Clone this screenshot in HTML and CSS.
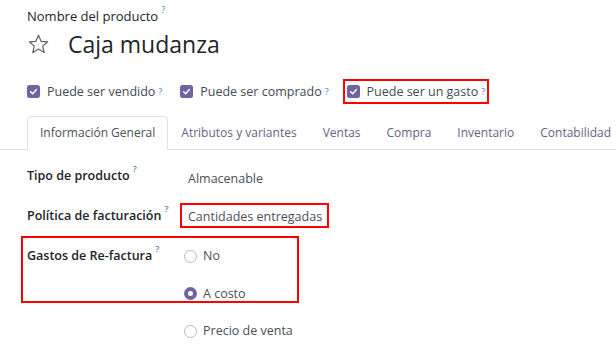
FILE: index.html
```html
<!DOCTYPE html>
<html lang="es">
<head>
<meta charset="utf-8">
<title>Caja mudanza</title>
<link rel="stylesheet" href="styles.css">
</head>
<body>
<div class="sheet">
  <div class="name-label">Nombre del producto<sup class="tip">?</sup></div>
  <div class="title-row">
    <svg class="star" width="21" height="20" viewBox="0 0 21 20"><polygon points="10.5,1.2 13.1,7.3 19.7,7.8 14.7,12.1 16.2,18.6 10.5,15.1 4.8,18.6 6.3,12.1 1.3,7.8 7.9,7.3" fill="none" stroke="#5f5f5f" stroke-width="1.2" stroke-linejoin="round"/></svg>
    <h1 class="title">Caja mudanza</h1>
  </div>
  <div class="checks">
    <label class="check"><svg class="cbox" width="13" height="13" viewBox="0 0 13 13"><rect width="13" height="13" rx="2.5" fill="#71639e"/><path d="M3.6 6.7 L5.7 8.7 L9.4 4.6" fill="none" stroke="#fff" stroke-width="1.5" stroke-linecap="round" stroke-linejoin="round"/></svg>Puede ser vendido<sup class="tip">?</sup></label>
    <label class="check"><svg class="cbox" width="13" height="13" viewBox="0 0 13 13"><rect width="13" height="13" rx="2.5" fill="#71639e"/><path d="M3.6 6.7 L5.7 8.7 L9.4 4.6" fill="none" stroke="#fff" stroke-width="1.5" stroke-linecap="round" stroke-linejoin="round"/></svg>Puede ser comprado<sup class="tip">?</sup></label>
    <span class="annot annot-check"><label class="check"><svg class="cbox" width="13" height="13" viewBox="0 0 13 13"><rect width="13" height="13" rx="2.5" fill="#71639e"/><path d="M3.6 6.7 L5.7 8.7 L9.4 4.6" fill="none" stroke="#fff" stroke-width="1.5" stroke-linecap="round" stroke-linejoin="round"/></svg>Puede ser un gasto<sup class="tip">?</sup></label></span>
  </div>
  <nav class="tabs">
    <span class="tab active">Información General</span>
    <span class="tab">Atributos y variantes</span>
    <span class="tab">Ventas</span>
    <span class="tab">Compra</span>
    <span class="tab">Inventario</span>
    <span class="tab">Contabilidad</span>
  </nav>
  <div class="fields">
    <div class="field">
      <div class="flabel">Tipo de producto<sup class="tip">?</sup></div>
      <div class="fval fval-low">Almacenable</div>
    </div>
    <div class="field field-mid">
      <div class="flabel">Política de facturación<sup class="tip">?</sup></div>
      <div class="fval"><span class="annot annot-val">Cantidades entregadas</span></div>
    </div>
    <div class="field field-radio">
      <div class="flabel">Gastos de Re-factura<sup class="tip">?</sup></div>
      <div class="radios">
        <div class="radio"><span class="rdot"></span>No</div>
        <div class="radio"><span class="rdot on"></span>A costo</div>
        <div class="radio"><span class="rdot"></span>Precio de venta</div>
      </div>
      <div class="annot-overlay"></div>
    </div>
  </div>
</div>
</body>
</html>
```
FILE: styles.css
```css
html, body {
  margin: 0;
  padding: 0;
  background: #fff;
  overflow: hidden;
}
body {
  font-family: "Open Sans", "Noto Sans", sans-serif;
  font-size: 12px;
  color: #212529;
}
.sheet {
  padding: 7px 0 0 27px;
}
.tip {
  font-size: 9px;
  color: #4c86b4;
  margin-left: 3px;
  vertical-align: 8px;
  line-height: 0;
}
.name-label {
  font-size: 13px;
  line-height: 18px;
  font-weight: 500;
  color: #212529;
}
.title-row {
  display: flex;
  align-items: center;
  margin-top: 4px;
  height: 30px;
}
.star {
  margin: 0 19px 0 1px;
}
.title {
  margin: 0;
  font-size: 23px;
  font-weight: 400;
  line-height: 30px;
  color: #212529;
}
.checks {
  display: flex;
  align-items: center;
  height: 25px;
  margin-top: 20px;
}
.check {
  display: flex;
  align-items: center;
  font-size: 12.5px;
  line-height: 18px;
  color: #454a57;
}
.check + .check {
  margin-left: 18px;
}
.cbox {
  margin-right: 7px;
  flex: none;
}
.annot {
  border: 2px solid #ff0000;
}
.annot-check {
  margin-left: 14px;
  padding: 0 2px 0 2px;
  height: 21px;
  display: flex;
  align-items: center;
}
.tabs {
  display: flex;
  margin: 12px 0 0 -27px;
  padding-left: 27px;
  border-bottom: 1px solid #dee2e6;
  white-space: nowrap;
}
.tab {
  padding: 0 12px;
  line-height: 32px;
  font-size: 12px;
  color: #6a6283;
  border: 1px solid transparent;
  border-bottom: 0;
  margin-bottom: -1px;
  padding-bottom: 1px;
}
.tab.active {
  color: #495057;
  border-color: #dee2e6;
  border-radius: 4px 4px 0 0;
  background: #fff;
}
.fields {
  padding-top: 16px;
}
.field {
  display: flex;
  align-items: flex-start;
  line-height: 20px;
  position: relative;
}
.flabel {
  width: 161px;
  flex: none;
  font-weight: 600;
  font-size: 12.5px;
  color: #212529;
}
.fval {
  font-size: 12.5px;
  color: #4a4f5c;
}
.fval-low {
  padding-top: 3px;
}
.field-mid {
  align-items: center;
  margin-top: 14px;
}
.annot-val {
  display: block;
  margin-left: -8px;
  padding: 3px 5px 0 6px;
  line-height: 18px;
  height: 18px;
}
.field-radio {
  margin-top: 18px;
}
.radios {
  display: flex;
  flex-direction: column;
  gap: 17.5px;
}
.radio {
  display: flex;
  align-items: center;
  font-size: 12.5px;
  color: #4a4f5c;
  margin-left: -4px;
}
.rdot {
  width: 13px;
  height: 13px;
  box-sizing: border-box;
  border: 1px solid #b9b9b9;
  border-radius: 50%;
  margin-right: 6px;
  background: #fff;
}
.rdot.on {
  border: 4px solid #71639e;
}
.annot-overlay {
  position: absolute;
  left: -6px;
  top: -10px;
  width: 278px;
  height: 67px;
  box-sizing: border-box;
  border: 2px solid #ff0000;
}
```
